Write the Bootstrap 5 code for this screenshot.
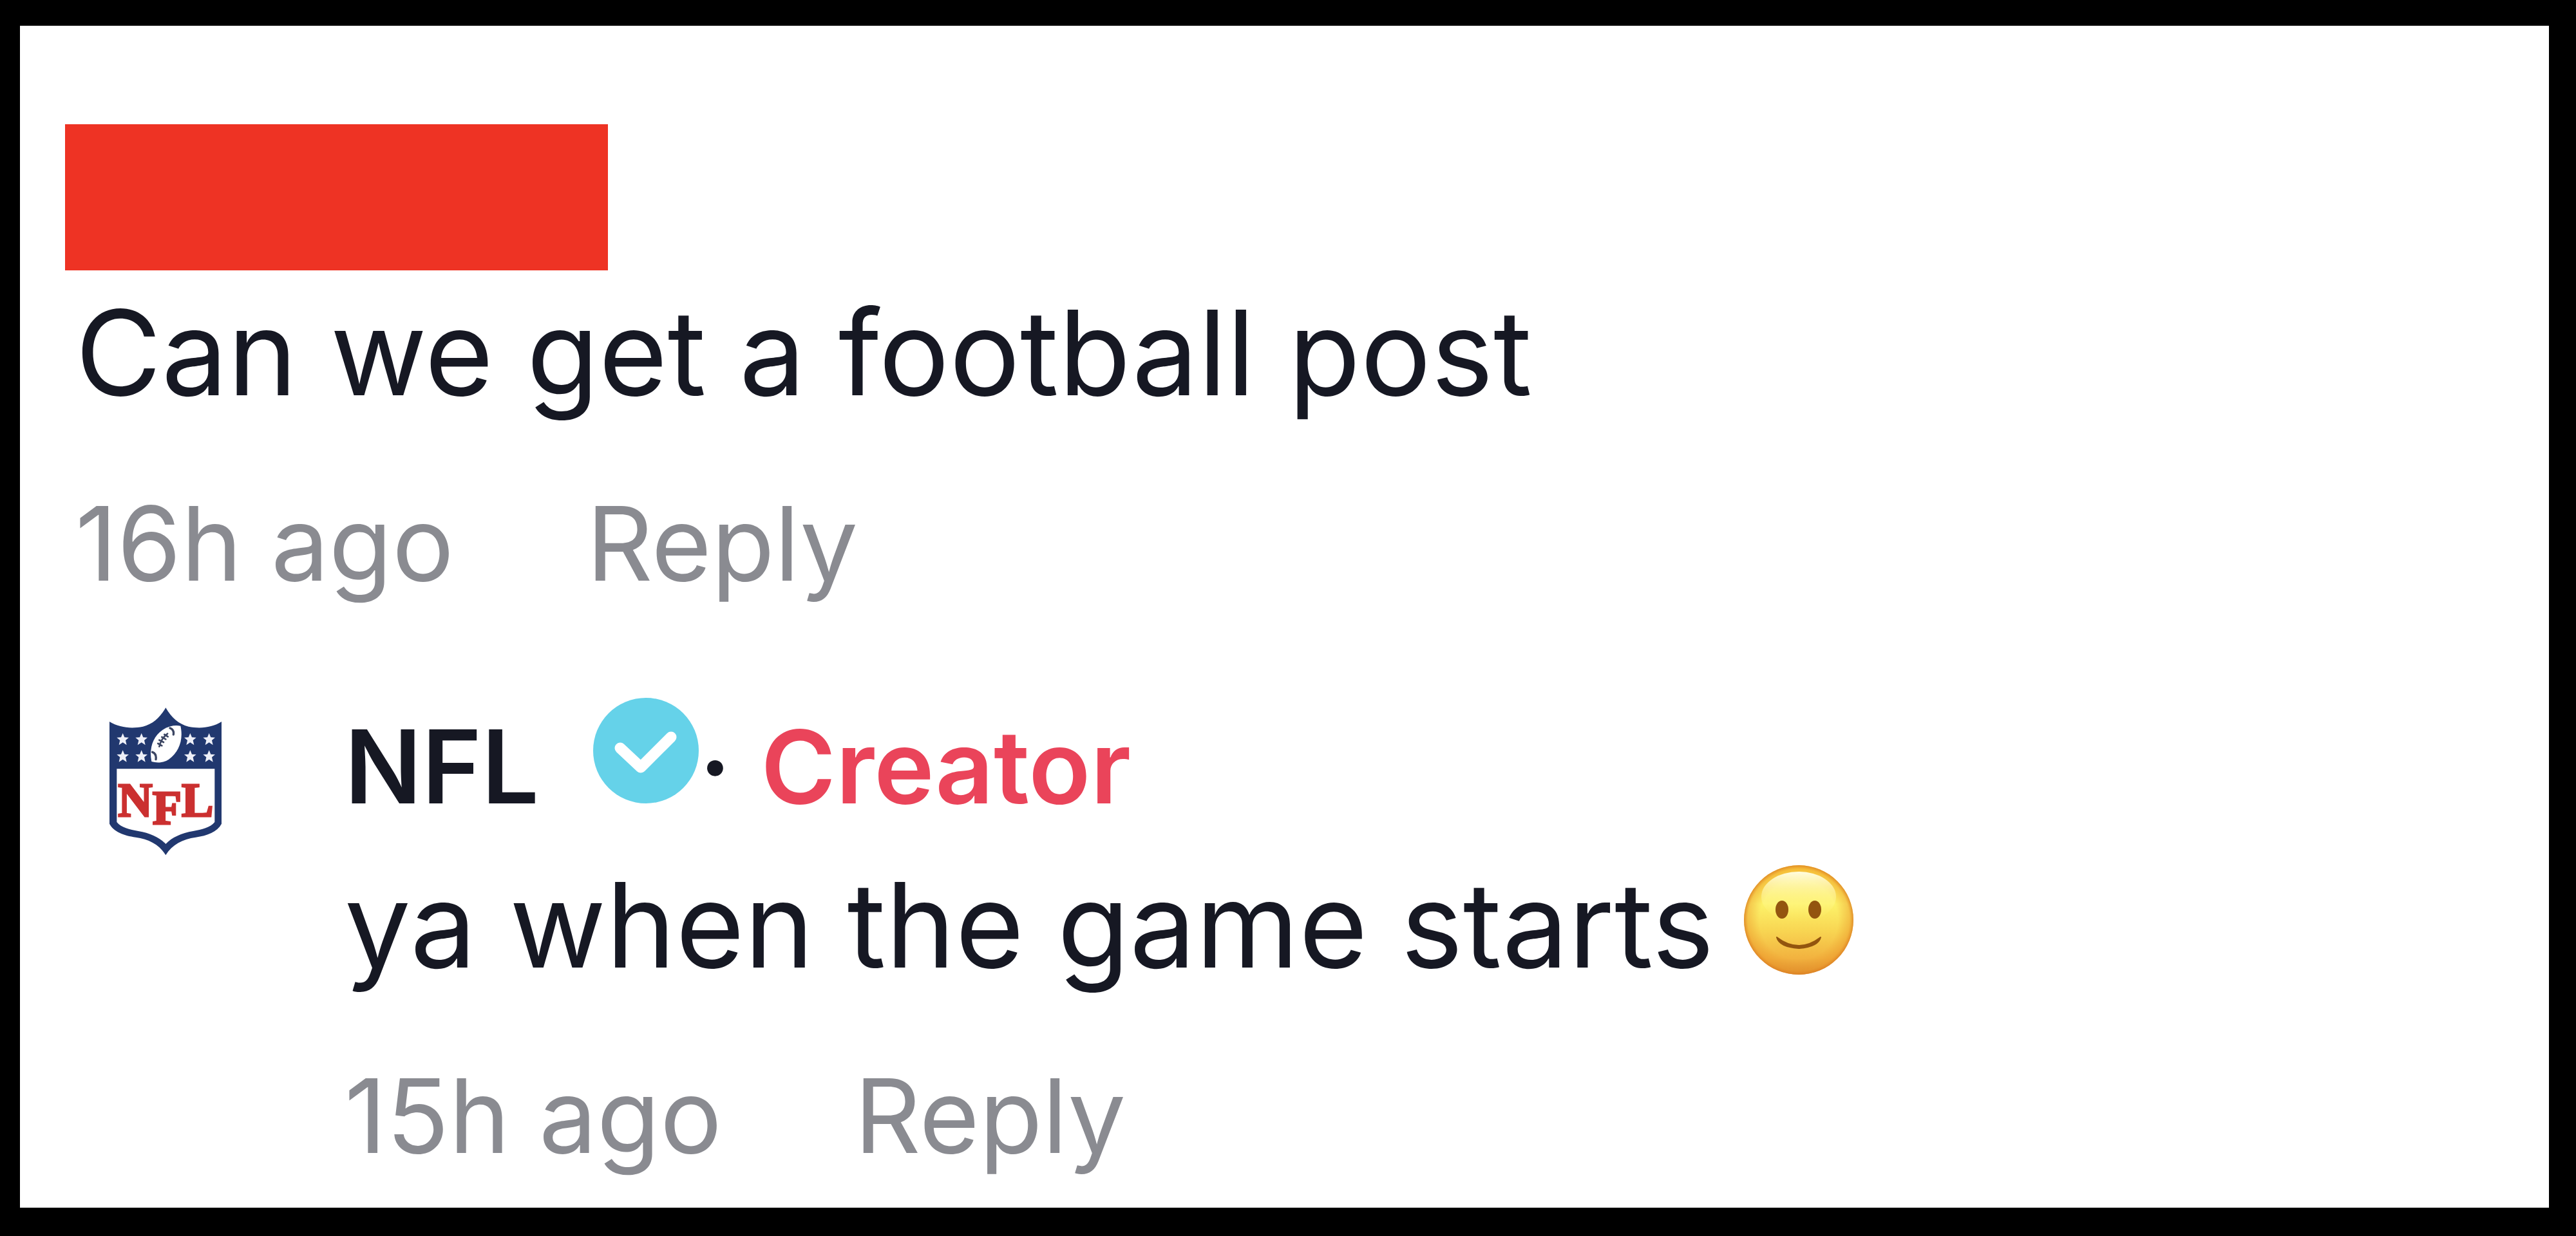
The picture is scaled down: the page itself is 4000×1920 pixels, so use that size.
<!DOCTYPE html>
<html lang="en">
<head>
<meta charset="utf-8">
<meta name="viewport" content="width=device-width, initial-scale=1">
<title>Comments</title>
<link href="https://cdn.jsdelivr.net/npm/bootstrap@5.3.0/dist/css/bootstrap.min.css" rel="stylesheet">
<style>
  body { background: #000; padding: 40px 42px 44px 31px; font-family: Inter, "Liberation Sans", sans-serif; color: #161823; }
  .thread { background: #fff; padding: 153px 70px 44px 70px; }
  .redacted { width: 843px; height: 227px; background: #ee3324; margin-bottom: 18px; }
  .comment-block { padding-left: 16px; }
  .comment-text { font-size: 183px; line-height: 220px; }
  .meta-row { font-size: 160px; line-height: 192px; margin-top: 90px; gap: 206px; color: #8a8b91; }
  .meta-row button { color: inherit; line-height: inherit; }
  .reply-row { margin-top: 144px; padding-left: 48px; gap: 185px; }
  .avatar { width: 185px; height: 237px; margin-top: 10px; }
  .name-row { font-size: 158px; line-height: 192px; margin-bottom: 40px; }
  .verified { width: 164px; height: 164px; margin-left: 84px; }
  .creator-label { color: #ea445a; margin-left: 46px; }
  .emoji { width: 172px; height: 172px; vertical-align: -12px; margin-left: -6px; }
</style>
</head>
<body class="min-vh-100 d-flex flex-column">
<main class="thread flex-grow-1">
  <article>
    <div class="redacted"></div>
    <div class="comment-block">
      <p class="comment-text mb-0">Can we get a football post</p>
      <div class="meta-row d-flex">
        <span>16h ago</span>
        <button type="button" class="border-0 bg-transparent p-0">Reply</button>
      </div>
      <article class="reply-row d-flex align-items-start">
        <svg class="avatar flex-shrink-0" viewBox="75 39 555 711" role="img" aria-label="NFL shield">
          <path d="M352 55C378 100 412 132 458 143C512 154 568 148 612 120V596C592 634 545 651 492 659C430 668 382 692 352 742C322 692 274 668 212 659C159 651 110 634 90 596V120C136 148 192 154 246 143C292 132 326 100 352 55Z" fill="#21386f"/>
          <path d="M124 340H580V588C560 614 520 623 480 630C425 639 380 660 352 690C324 660 279 639 224 630C184 623 144 614 124 588Z" fill="#fff"/>
          <g fill="#eef0f8">
            <path id="star" d="M152 174L160 193L180 194L165 207L170 229L152 217L134 229L139 207L124 194L144 193Z"/>
            <use href="#star" x="87"/><use href="#star" x="314"/><use href="#star" x="402"/>
            <use href="#star" y="79"/><use href="#star" x="87" y="79"/><use href="#star" x="314" y="79"/><use href="#star" x="402" y="79"/>
          </g>
          <path d="M421 140C435 204 414 262 366 296C338 314 308 312 286 306C274 248 290 190 338 158C366 140 396 134 421 140Z" fill="#fff"/>
          <g fill="none" stroke="#3c4663" stroke-linecap="round">
            <path d="M372 150Q392 158 388 180M290 262Q310 270 306 296" stroke-width="10"/>
            <path d="M322 236Q330 200 360 176M316 222L334 232M322 206L342 216M334 192L352 202M346 180L362 190" stroke-width="8"/>
          </g>
          <text x="352" y="562" fill="#cb3030" stroke="#cb3030" stroke-width="9" font-family="'Liberation Serif',serif" font-weight="700" font-size="222" text-anchor="middle">N<tspan dy="34">F</tspan><tspan dy="-34">L</tspan></text>
        </svg>
        <div>
          <div class="name-row d-flex align-items-baseline fw-semibold">
            <span>NFL</span>
            <svg class="verified" viewBox="0 0 164 164" role="img" aria-label="Verified">
              <circle cx="82" cy="82" r="82" fill="#65d2e9"/>
              <path d="M42 78L74 108L121 61" fill="none" stroke="#fff" stroke-width="17" stroke-linecap="round" stroke-linejoin="round"/>
            </svg>
            <span>·</span>
            <span class="creator-label">Creator</span>
          </div>
          <p class="comment-text mb-0">ya when the game starts <svg class="emoji" viewBox="0 0 172 172" role="img" aria-label="Slightly smiling face">
            <defs>
              <linearGradient id="face" x1="0" y1="0" x2="0" y2="1"><stop offset="0" stop-color="#fdd83f"/><stop offset=".35" stop-color="#fdf36a"/><stop offset=".6" stop-color="#f8d552"/><stop offset=".85" stop-color="#f2b23f"/><stop offset="1" stop-color="#dd9232"/></linearGradient>
              <radialGradient id="rim"><stop offset=".72" stop-color="#e98f25" stop-opacity="0"/><stop offset=".93" stop-color="#e98f25" stop-opacity=".4"/><stop offset="1" stop-color="#dc7f22" stop-opacity=".85"/></radialGradient>
              <linearGradient id="shine" x1="0" y1="0" x2="0" y2="1"><stop offset="0" stop-color="#fffde0"/><stop offset="1" stop-color="#fff36a" stop-opacity="0"/></linearGradient>
            </defs>
            <circle cx="86" cy="86" r="85" fill="url(#face)"/>
            <circle cx="86" cy="86" r="85" fill="url(#rim)"/>
            <ellipse cx="86" cy="50" rx="58" ry="39" fill="url(#shine)"/>
            <ellipse cx="60" cy="70" rx="10" ry="14" fill="#93550f"/>
            <ellipse cx="111" cy="70" rx="10" ry="14" fill="#93550f"/>
            <path d="M52 113Q86 139 120 113Q116 128 86 130Q56 128 52 113Z" fill="#93550f" stroke="#93550f" stroke-width="2" stroke-linejoin="round"/>
          </svg></p>
          <div class="meta-row d-flex">
            <span>15h ago</span>
            <button type="button" class="border-0 bg-transparent p-0">Reply</button>
          </div>
        </div>
      </article>
    </div>
  </article>
</main>
<script src="https://cdn.jsdelivr.net/npm/bootstrap@5.3.0/dist/js/bootstrap.bundle.min.js"></script>
</body>
</html>
